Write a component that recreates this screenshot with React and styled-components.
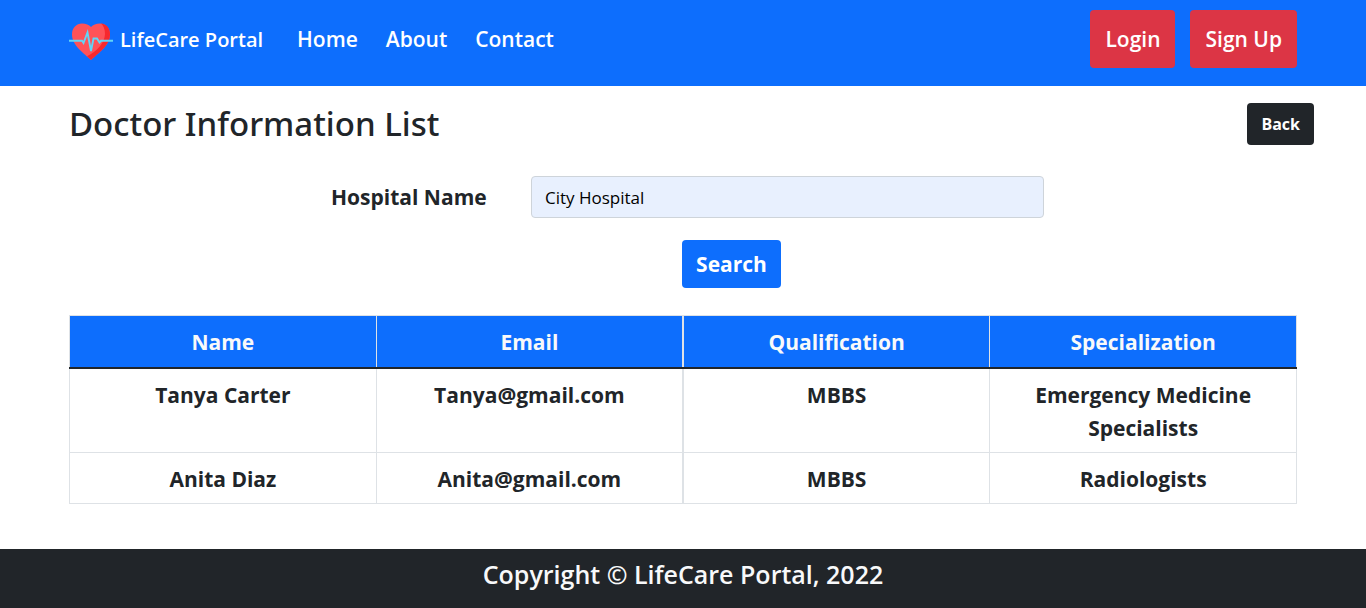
import React from "react";
import styled, { createGlobalStyle } from "styled-components";

const GlobalStyle = createGlobalStyle`
  *, *::before, *::after { box-sizing: border-box; }
  body {
    margin: 0;
    background: #fff;
    color: #212529;
    font-family: "Open Sans", "Noto Sans", sans-serif;
    font-size: 21px;
    line-height: 33px;
  }
`;

const Page = styled.div`
  display: flex;
  flex-direction: column;
  min-height: 100vh;
`;

const Header = styled.header`
  background: #0d6efd;
  padding: 10px 69px 18px;
`;

const Nav = styled.nav`
  display: flex;
  align-items: center;
`;

const Brand = styled.a`
  display: flex;
  align-items: center;
  gap: 7px;
  margin-right: 20px;
  color: #fff;
  font-size: 20px;
  font-weight: 600;
  text-decoration: none;
`;

const Links = styled.div`
  display: flex;
  flex: 1;
`;

const NavLink = styled.a`
  padding: 0 14px;
  color: #fff;
  font-weight: 600;
  text-decoration: none;
`;

const Actions = styled.div`
  display: flex;
  gap: 15px;
`;

const Button = styled.button`
  border: 0;
  border-radius: 4px;
  padding: ${(p) => p.$padding || "7px 14px"};
  background: ${(p) => p.$color};
  color: #fff;
  font-family: inherit;
  font-size: ${(p) => p.$size || "21px"};
  font-weight: ${(p) => p.$weight || 700};
  line-height: ${(p) => p.$line || "34px"};
  cursor: pointer;
`;

const Main = styled.main`
  flex: 1;
`;

const TitleBar = styled.div`
  display: flex;
  align-items: center;
  justify-content: space-between;
  padding: 17px 52px 0 69px;
`;

const Title = styled.h1`
  margin: 0;
  font-family: "Noto Sans", "Open Sans", sans-serif;
  font-size: 33px;
  font-weight: 500;
  line-height: 42px;
`;

const SearchForm = styled.form`
  margin: 31px 69px 0;
  padding-left: 9px;
  display: grid;
  grid-template-columns: 200px minmax(0, 513px);
  justify-content: center;
  align-items: center;
  row-gap: 22px;
`;

const Label = styled.label`
  font-weight: 700;
`;

const Input = styled.input`
  width: 100%;
  height: 42px;
  padding: 0 13px;
  border: 1px solid #ced4da;
  border-radius: 4px;
  background: #e8f0fe;
  color: #000;
  font-family: inherit;
  font-size: 17px;
`;

const SubmitRow = styled.div`
  grid-column: 1 / -1;
  display: flex;
  justify-content: center;
  padding-left: 88px;
`;

const TableWrap = styled.div`
  padding: 27px 69px 45px;
`;

const Table = styled.table`
  width: 100%;
  border-collapse: collapse;
  table-layout: fixed;
  text-align: center;
  font-weight: 700;

  th:nth-child(3),
  td:nth-child(3) {
    border-left-width: 2px;
  }
`;

const HeadCell = styled.th`
  padding: 10px 9px 8px;
  border: 1px solid #dee2e6;
  border-bottom: 2px solid #212529;
  background: #0d6efd;
  color: #f8f9fa;
`;

const Cell = styled.td`
  padding: 10px 9px 7px;
  border: 1px solid #dee2e6;
  vertical-align: top;
`;

const Footer = styled.footer`
  padding: 9px 16px 17px;
  background: #212529;
  color: #f8f9fa;
  font-size: 25px;
  font-weight: 600;
  text-align: center;
`;

const HeartLogo = () => (
  <svg width="44" height="44" viewBox="0 -6 44 44" aria-hidden="true">
    <path
      d="M22 37C16 31 3 23 3 11.500C3 4.500 7.500 0.500 13 0.500C17 0.500 20 2 22 4C24 2 27 0.500 31 0.500C36.500 0.500 41 4.500 41 11.500C41 23 28 31 22 37Z"
      fill="#ff5258"
    />
    <path
      d="M32 0.500C37 1 41 4.500 41 11.500C41 23 28 31 22 37L18 33.300C28 28 35.500 20.500 36 11C36 6 34.500 2.500 32 0.500Z"
      fill="#f7282e"
    />
    <path
      d="M0 17.800H13L14.500 20L18.500 9.500L22 28L24.500 15.500H28L30.500 19.500L32 17.800H44"
      fill="none"
      stroke="#62d5f6"
      strokeWidth="1.900"
    />
  </svg>
);

const columns = ["Name", "Email", "Qualification", "Specialization"];
const doctors = [
  ["Tanya Carter", "Tanya@gmail.com", "MBBS", "Emergency Medicine Specialists"],
  ["Anita Diaz", "Anita@gmail.com", "MBBS", "Radiologists"],
];

export default function App() {
  return (
    <Page>
      <GlobalStyle />
      <Header>
        <Nav>
          <Brand href="#">
            <HeartLogo />
            LifeCare Portal
          </Brand>
          <Links>
            <NavLink href="#home">Home</NavLink>
            <NavLink href="#about">About</NavLink>
            <NavLink href="#contact">Contact</NavLink>
          </Links>
          <Actions>
            <Button type="button" $color="#dc3545" $weight={600} $padding="12px 15px">
              Login
            </Button>
            <Button type="button" $color="#dc3545" $weight={600} $padding="12px 15px">
              Sign Up
            </Button>
          </Actions>
        </Nav>
      </Header>
      <Main>
        <TitleBar>
          <Title>Doctor Information List</Title>
          <Button type="button" $color="#212529" $size="16px" $line="28px">
            Back
          </Button>
        </TitleBar>
        <SearchForm onSubmit={(e) => e.preventDefault()}>
          <Label htmlFor="hospital">Hospital Name</Label>
          <Input id="hospital" type="text" defaultValue="City Hospital" />
          <SubmitRow>
            <Button type="submit" $color="#0d6efd">
              Search
            </Button>
          </SubmitRow>
        </SearchForm>
        <TableWrap>
          <Table>
            <thead>
              <tr>
                {columns.map((name) => (
                  <HeadCell key={name} scope="col">{name}</HeadCell>
                ))}
              </tr>
            </thead>
            <tbody>
              {doctors.map((row) => (
                <tr key={row[0]}>
                  {row.map((value, i) => (
                    <Cell key={i}>{value}</Cell>
                  ))}
                </tr>
              ))}
            </tbody>
          </Table>
        </TableWrap>
      </Main>
      <Footer>Copyright © LifeCare Portal, 2022</Footer>
    </Page>
  );
}
